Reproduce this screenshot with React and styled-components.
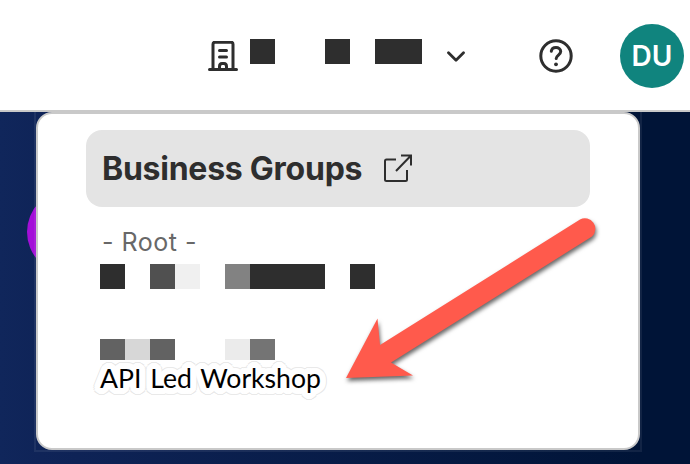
import React from "react";
import styled, { createGlobalStyle } from "styled-components";

const Global = createGlobalStyle`
  * { box-sizing: border-box; }
  body { margin: 0; font-family: Inter, "Liberation Sans", sans-serif; overflow: hidden; }
`;

const Page = styled.div`
  position: relative;
  width: 690px;
  height: 464px;
  overflow: hidden;
  background: linear-gradient(90deg, #10265b 0, #0f2458 40px, #001437 640px, #001437 100%);
`;

const Header = styled.header`
  display: flex;
  align-items: center;
  height: 112px;
  padding: 0 6px 0 208px;
  background: #fff;
  border-bottom: 2px solid #c9c9c9;
`;

const OrgPicker = styled.div`
  display: flex;
  width: 331px;
`;

const BuildingIcon = styled.svg`
  width: 30px;
  height: 32px;
  margin-top: 3px;
`;

const ChevronIcon = styled.svg`
  width: 20px;
  height: 12px;
  margin: 13px 0 0 24px;
`;

const HelpIcon = styled.svg`
  width: 34px;
  height: 34px;
  margin-top: 2px;
`;

const Avatar = styled.div`
  display: grid;
  place-items: center;
  width: 64px;
  height: 64px;
  margin: 2px 0 0 47px;
  border-radius: 50%;
  background: #10847e;
  color: #fff;
  font-size: 28px;
  font-weight: 600;
  letter-spacing: 0.2px;
`;

const Mask = styled.div`
  display: flex;
  height: ${(p) => p.$height ?? 25}px;
  margin: ${(p) => p.$margin ?? "0"};
`;

const MaskBlock = styled.span`
  width: ${(p) => p.$width}px;
  background: ${(p) => p.$tone};
`;

const Menu = styled.section`
  position: relative;
  width: 604px;
  height: 338px;
  margin-left: 36px;
  padding: 16px 48px;
  background: #fff;
  border: 2px solid #c9c9c9;
  border-radius: 16px;
`;

const MenuShade = styled.div`
  position: absolute;
  left: 34px;
  top: 112px;
  width: 608px;
  height: 340px;
  border: solid rgba(255, 255, 255, 0.07);
  border-width: 0 2px 2px;
`;

const Glow = styled.div`
  position: absolute;
  left: 27px;
  top: 190px;
  width: 84px;
  height: 84px;
  border-radius: 50%;
  background: #a30fd8;
`;

const MenuTitle = styled.a`
  display: flex;
  align-items: center;
  width: 504px;
  height: 77px;
  padding-left: 16px;
  border-radius: 16px;
  background: #e4e4e4;
  color: #2e2e2e;
  font-size: 32px;
  font-weight: 700;
  white-space: nowrap;
`;

const TitleText = styled.span`
  width: 281px;
  letter-spacing: -0.25px;
`;

const ExternalIcon = styled.svg`
  width: 30px;
  height: 30px;
`;

const RootLabel = styled.div`
  margin: 19px 0 0 16px;
  height: 32px;
  line-height: 32px;
  color: #686868;
  font-size: 25px;
  letter-spacing: 0.5px;
  white-space: pre;
`;

const ring = (radius, color) =>
  Array.from({ length: 24 }, (_, i) => {
    const angle = (i * Math.PI) / 12;
    const x = (radius * Math.cos(angle)).toFixed(2);
    const y = (radius * Math.sin(angle)).toFixed(2);
    return `${x}px ${y}px 0 ${color}`;
  }).join(", ");

const halo = [ring(3, "#fff"), ring(6, "#fff"), ring(7, "#e9e9e9")].join(", ");

const GroupName = styled.div`
  position: relative;
  width: max-content;
  height: 36px;
  margin: 0 0 0 14px;
  line-height: 36px;
  font-family: Lato, sans-serif;
  font-size: 26.6px;
  word-spacing: 2px;
  color: #000;
  white-space: nowrap;
  text-shadow: ${halo};
`;

const Pointer = styled.svg`
  position: absolute;
  left: 0;
  top: 0;
  width: 690px;
  height: 464px;
  filter: drop-shadow(1px 3px 2px rgba(0, 0, 0, 0.6));
`;

const dark = "#2e2e2e";
const clear = "transparent";
const orgMask = [[25, dark], [50, clear], [25, dark], [25, clear], [47, dark]];
const rootMask = [
  [25, dark], [25, clear], [25, "#505050"], [25, "#f0f0f0"], [25, clear],
  [25, "#828282"], [75, dark], [25, clear], [25, dark],
];
const groupMask = [
  [25, "#626262"], [25, "#d7d7d7"], [25, "#626262"], [50, clear],
  [25, "#ebebeb"], [25, "#747474"],
];

function Redacted({ blocks, height, margin }) {
  return (
    <Mask $height={height} $margin={margin}>
      {blocks.map(([width, tone], i) => (
        <MaskBlock key={i} $width={width} $tone={tone} />
      ))}
    </Mask>
  );
}

export default function App() {
  return (
    <Page>
      <Global />
      <Header>
        <OrgPicker>
          <BuildingIcon viewBox="0 0 30 32" fill="none" stroke={dark} strokeWidth="3" strokeLinecap="round" strokeLinejoin="round">
            <path d="M1.5 28.500h27M5 28V3.200q0-2 2-2h16q2 0 2 2V28M11.500 9.500h7M11.500 16h7M11.500 28v-2.500q0-3 2.500-3h2q2.500 0 2.500 3V28" />
          </BuildingIcon>
          <Redacted blocks={orgMask} margin="1px 0 0 12px" />
          <ChevronIcon viewBox="0 0 20 12" fill="none" stroke={dark} strokeWidth="2.8" strokeLinecap="round" strokeLinejoin="round">
            <path d="M2.5 1.8 10 9.3l7.5-7.5" />
          </ChevronIcon>
        </OrgPicker>
        <HelpIcon viewBox="0 0 34 34" fill="none" stroke={dark} strokeWidth="3" strokeLinecap="round" strokeLinejoin="round">
          <circle cx="17" cy="17" r="15.2" />
          <path d="M12.300 12.300c.3-2.500 2.200-3.800 4.700-3.800s4.700 1.600 4.700 4.100c0 3.300-4.500 3.600-4.500 6.900" />
          <circle cx="17" cy="25.300" r="1.900" fill={dark} stroke="none" />
        </HelpIcon>
        <Avatar>DU</Avatar>
      </Header>
      <Glow />
      <MenuShade />
      <Menu>
        <MenuTitle>
          <TitleText>Business Groups</TitleText>
          <ExternalIcon viewBox="0 0 30 30" fill="none" stroke={dark} strokeWidth="2">
            <path d="M13 5.500H3.500Q2 5.500 2 7v18.500Q2 27 3.500 27h19q1.500 0 1.500-1.500V16M18 1.500h10v10M28 1.500 13 17" />
          </ExternalIcon>
        </MenuTitle>
        <RootLabel>- Root -</RootLabel>
        <Redacted blocks={rootMask} margin="6px 0 0 14px" />
        <Redacted blocks={groupMask} height={21} margin="50px 0 0 14px" />
        <GroupName>API Led Workshop</GroupName>
      </Menu>
      <Pointer viewBox="0 0 690 464">
        <path fill="#ff5a4c" d="M346 378 377.500 318.500 380 345 580 219.500A10.500 10.500 0 0 1 592 236.500L391 362.500 413 375.500Z" />
      </Pointer>
    </Page>
  );
}
